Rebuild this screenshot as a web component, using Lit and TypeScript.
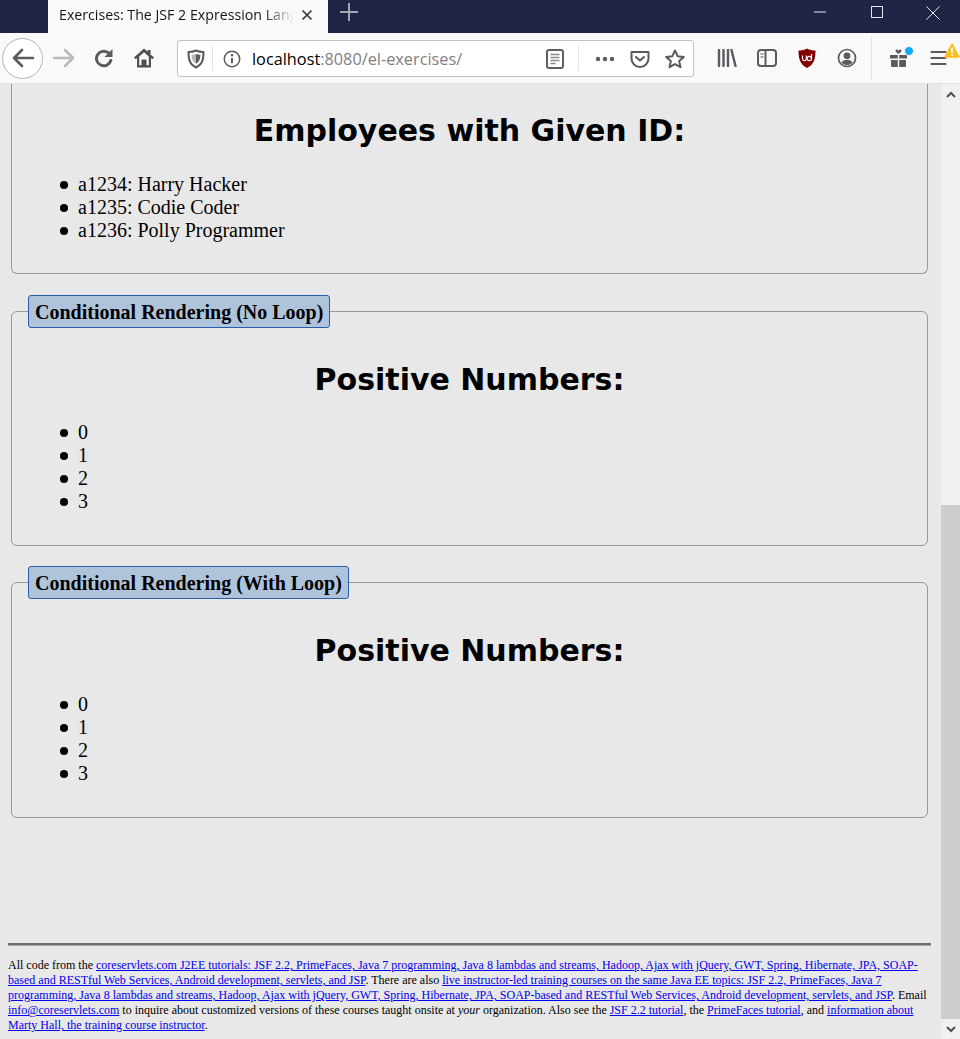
import { LitElement, css, html, svg } from "lit";
import { customElement } from "lit/decorators.js";

const ico = (w: number, h: number, body: unknown) =>
  html`<svg width=${w} height=${h} viewBox="0 0 ${w} ${h}" fill="none">${body}</svg>`;

const icons = {
  back: ico(24, 24, svg`<path d="M3 12h19M11 4l-8 8 8 8" stroke="#5b5b5e" stroke-width="2.600" stroke-linecap="round" stroke-linejoin="round"/>`),
  forward: ico(24, 24, svg`<path d="M2 12h19M13 4l8 8-8 8" stroke="#b9b9bb" stroke-width="2.600" stroke-linecap="round" stroke-linejoin="round"/>`),
  reload: ico(20, 20, svg`<path d="M16.800 12.500A7.300 7.300 0 1 1 14 4.500L16.500 7" stroke="#5b5b5e" stroke-width="3" stroke-linecap="round"/><path d="M18.500 1v8h-8z" fill="#5b5b5e"/>`),
  home: ico(22, 22, svg`<path d="M11 1.500 1 10.500l1.600 1.800 1.400-1.200V20.500h14V11.100l1.400 1.200 1.600-1.800L17.500 7.400V3h-3v1.700z" fill="#505053"/><path d="M11 5.200 6.200 9.500v8.800h2.300v-4.800a1 1 0 0 1 1-1h3a1 1 0 0 1 1 1v4.800h2.300V9.500z" fill="#f9f9fa"/><path d="M9.800 14.500h2.400v4.500H9.800z" fill="#505053"/>`),
  shield: ico(18, 20, svg`<path d="M9 1.500c2 1 5 1.500 7.500 1.500 0 7.500-1 12.500-7.500 15.500C2.500 15.500 1.500 10.500 1.500 3 4 3 7 2.500 9 1.500z" stroke="#5b5b5e" stroke-width="2" stroke-linejoin="round"/><path d="M9 5c1.200.5 3 .8 4.400.8 0 4.200-1 7-4.400 9z" fill="#5b5b5e"/><path d="M9 5c-1.200.5-3 .8-4.400.8 0 4.200 1 7 4.400 9z" fill="#b5b5b8"/>`),
  info: ico(18, 18, svg`<circle cx="9" cy="9" r="7.700" stroke="#5b5b5e" stroke-width="1.500"/><path d="M9 8v5.200" stroke="#5b5b5e" stroke-width="1.900"/><circle cx="9" cy="5.200" r="1.200" fill="#5b5b5e"/>`),
  reader: ico(18, 20, svg`<rect x="1" y="1" width="16" height="18" rx="2" stroke="#5f5f62" stroke-width="2"/><path d="M4.500 5.500h9M4.500 8.500h9M4.500 11.500h9M4.500 14.500h5" stroke="#8a8a8d" stroke-width="1.600"/>`),
  dots: ico(20, 6, svg`<circle cx="3" cy="3" r="2.200" fill="#5b5b5e"/><circle cx="10" cy="3" r="2.200" fill="#5b5b5e"/><circle cx="17" cy="3" r="2.200" fill="#5b5b5e"/>`),
  pocket: ico(20, 18, svg`<path d="M1.500 2h17v6.500a8.500 8.500 0 0 1-17 0z" stroke="#5b5b5e" stroke-width="2" stroke-linejoin="round"/><path d="M6 7l4 3.500L14 7" stroke="#5b5b5e" stroke-width="2" stroke-linecap="round" stroke-linejoin="round"/>`),
  star: ico(20, 20, svg`<path d="M10 1.500l2.600 5.700 6.200.7-4.600 4.200 1.300 6.100L10 15.100l-5.500 3.100 1.300-6.100L1.200 7.900l6.200-.7z" stroke="#5b5b5e" stroke-width="2" stroke-linejoin="round"/>`),
  library: ico(20, 18, svg`<path d="M2 1v16M6.500 1v16M11 1v16M14.500 1l4 16" stroke="#5b5b5e" stroke-width="2.400" stroke-linecap="round"/>`),
  sidebar: ico(20, 18, svg`<rect x="1" y="1" width="18" height="16" rx="3" stroke="#5b5b5e" stroke-width="2"/><path d="M8.500 1v16" stroke="#5b5b5e" stroke-width="2"/><path d="M3.500 5h3M3.500 8h3" stroke="#8a8a8d" stroke-width="1.500"/>`),
  ublock: ico(18, 20, svg`<path d="M9 0.500c2.500 1.500 5.500 2 8.500 2 0 8-1.500 14-8.500 17.500C2 16.500.5 10.500.5 2.500c3 0 6-.5 8.500-2z" fill="#800000"/><path d="M4.500 7.500v3.200a1.900 1.900 0 0 0 3.800 0V7.500" stroke="#fff" stroke-width="1.200"/><circle cx="11.300" cy="10.500" r="2.200" stroke="#fff" stroke-width="1.200"/><path d="M13.500 6v4.500" stroke="#fff" stroke-width="1.200"/>`),
  account: ico(20, 20, svg`<circle cx="10" cy="10" r="8.500" stroke="#5b5b5e" stroke-width="1.700"/><circle cx="10" cy="7.800" r="3.400" fill="#5b5b5e"/><path d="M4.500 14.500c1-2 3-2.500 5.500-2.500s4.500.5 5.500 2.500C14 16.500 12 17 10 17s-4-.5-5.500-2.500z" fill="#5b5b5e"/>`),
  gift: ico(20, 20, svg`<path d="M1 7h7.800v3.500H1zM10.200 7H18v3.500h-7.800zM2 12h6.800v7H3a1 1 0 0 1-1-1zM10.200 12H17v6a1 1 0 0 1-1 1h-5.800z" fill="#5b5b5e"/><path d="M9.500 6C8 4.800 6 3.800 6.500 2.300 7 1 9 1.500 9.500 2.600 10 1.500 12 1 12.500 2.300 13 3.800 11 4.800 9.500 6z" fill="#5b5b5e"/>`),
  menu: ico(18, 16, svg`<path d="M1.500 2h14M1.500 8h14M1.500 14h14" stroke="#5b5b5e" stroke-width="2.200" stroke-linecap="round"/>`),
  warn: ico(16, 15, svg`<path d="M8 1 15 14H1z" fill="#ffbf1f" stroke="#ffbf1f" stroke-width="1.500" stroke-linejoin="round"/><path d="M8 4.500v5.200" stroke="#fff" stroke-width="1.800"/><circle cx="8" cy="12" r="1.100" fill="#fff"/>`),
  tabClose: ico(12, 12, svg`<path d="M1.500 1.500l9 9M10.500 1.500l-9 9" stroke="#38383d" stroke-width="1.700"/>`),
  plus: ico(18, 18, svg`<path d="M9 0v18M0 9h18" stroke="#a5a6b4" stroke-width="2"/>`),
  min: ico(12, 2, svg`<path d="M0 1h12" stroke="#e6e6ea" stroke-width="1"/>`),
  max: ico(12, 12, svg`<rect x=".5" y=".5" width="11" height="11" stroke="#e6e6ea"/>`),
  close: ico(14, 14, svg`<path d="M.5.500l13 13M13.500.500l-13 13" stroke="#e6e6ea" stroke-width="1"/>`),
  up: ico(10, 7, svg`<path d="M1 6l4-4 4 4" stroke="#505050" stroke-width="2"/>`),
  down: ico(10, 7, svg`<path d="M1 1l4 4 4-4" stroke="#505050" stroke-width="2"/>`),
};

const numbers = ["0", "1", "2", "3"];

@customElement("app-root")
export class AppRoot extends LitElement {
  static styles = css`
    :host {
      display: flex;
      flex-direction: column;
      width: 960px;
      height: 1039px;
      overflow: hidden;
      background: #e8e8e8;
      font-family: "Liberation Serif", serif;
      color: #000;
    }

    .tabbar {
      display: flex;
      align-items: stretch;
      height: 33px;
      flex: none;
      padding-left: 48px;
      background: #1f2344;
    }
    .tab {
      display: flex;
      align-items: center;
      width: 280px;
      box-sizing: border-box;
      padding: 0 14px 4px 11px;
      background: #f9f9fa;
      font: 14.200px "Open Sans", sans-serif;
      color: #15141a;
    }
    .tab-title {
      width: 235px;
      white-space: nowrap;
      overflow: hidden;
      -webkit-mask-image: linear-gradient(to right, #000 205px, transparent 235px);
      mask-image: linear-gradient(to right, #000 205px, transparent 235px);
    }
    .tab svg {
      margin-left: 7px;
    }
    .plus {
      display: flex;
      margin: 3px 0 0 12px;
    }
    .win {
      display: flex;
      align-items: flex-start;
      margin-left: auto;
      padding: 6px 20px 0 0;
      gap: 43px;
    }
    .win svg {
      display: block;
    }
    .win .m {
      margin: 5px 2px 0 0;
    }

    .toolbar {
      display: flex;
      align-items: center;
      height: 51px;
      flex: none;
      box-sizing: border-box;
      background: #f9f9fa;
      border-bottom: 1px solid #e1e1e2;
    }
    .backbtn {
      display: flex;
      align-items: center;
      justify-content: center;
      width: 41px;
      height: 41px;
      box-sizing: border-box;
      margin: 0 1px 0 2px;
      background: #fff;
      border: 1px solid #b4b4b6;
      border-radius: 50%;
    }
    .btn {
      display: flex;
      align-items: center;
      justify-content: center;
      width: 40px;
      height: 40px;
      flex: none;
    }
    .urlbar {
      display: flex;
      align-items: center;
      width: 517px;
      height: 37px;
      box-sizing: border-box;
      margin: 1px 13px 0 13px;
      background: #fff;
      border: 1px solid #c2c2c4;
      border-radius: 3px;
      font: 16.300px "Open Sans", sans-serif;
      color: #808083;
    }
    .urlbar .shield {
      display: flex;
      margin-left: 9px;
    }
    .sep {
      width: 1px;
      height: 25px;
      background: #e3e3e5;
      flex: none;
    }
    .urlbar .sep.a {
      margin: 0 10px 0 7px;
    }
    .urlbar .info {
      display: flex;
    }
    .urlbar .url {
      margin-left: 11px;
      white-space: nowrap;
      width: 294px;
    }
    .url b {
      font-weight: 400;
      color: #000;
    }
    .urlbar .reader {
      display: flex;
    }
    .urlbar .sep.b {
      margin: 0 16px 0 14px;
    }
    .urlbar .dots {
      display: flex;
    }
    .urlbar .pocket {
      display: flex;
      margin-left: 15px;
    }
    .urlbar .star {
      display: flex;
      margin-left: 15px;
    }
    .tools {
      display: flex;
      align-items: center;
      height: 100%;
    }
    .tools .btn {
      position: relative;
    }
    .tools .sep {
      height: 43px;
      margin: 0 7px 0 4px;
    }
    .badge {
      position: absolute;
      top: 8px;
      right: 5px;
      width: 8px;
      height: 8px;
      background: #12a8f5;
      border-radius: 50%;
      border: 1px solid #f9f9fa;
    }
    .warn {
      position: absolute;
      top: 5px;
      right: -1px;
      display: flex;
    }

    .main {
      display: flex;
      flex: 1;
      min-height: 0;
    }
    .page {
      flex: 1;
      min-width: 0;
      box-sizing: border-box;
      display: flex;
      flex-direction: column;
      padding: 0 10px 0 8px;
      background: #e8e8e8;
    }
    .scrollbar {
      display: flex;
      flex-direction: column;
      align-items: center;
      justify-content: space-between;
      width: 19px;
      flex: none;
      background: #f0f0f0;
    }
    .scrollbar .arrow {
      display: flex;
      align-items: center;
      height: 20px;
    }
    .scrollbar .spacer {
      height: 401px;
      flex: none;
    }
    .scrollbar .thumb {
      width: 100%;
      flex: 1;
      background: #cdcdcd;
    }

    fieldset {
      margin: 0 3px 20px 3px;
      padding: 0 16px 32px 16px;
      border: 1px solid #999;
      border-radius: 6px;
    }
    fieldset.cut {
      border-top: none;
      border-top-left-radius: 0;
      border-top-right-radius: 0;
      padding-bottom: 31px;
      margin-bottom: 21px;
    }
    legend {
      padding: 5px 6px 3px;
      font-size: 20px;
      font-weight: 700;
      line-height: 23px;
      background: #afc4da;
      border: 1px solid #2a5ca8;
      border-radius: 3px;
    }
    h2 {
      margin: 0;
      padding-top: 32px;
      text-align: center;
      font: 700 30px/40px "DejaVu Sans", sans-serif;
    }
    ul {
      margin: 21px 0 0 0;
      padding-left: 32px;
      list-style: none;
      font-size: 20px;
      line-height: 23px;
    }
    .cut ul,
    .loop ul {
      margin-top: 22px;
    }
    li {
      display: flex;
      align-items: center;
      gap: 10px;
    }
    li::before {
      content: "";
      width: 8px;
      height: 8px;
      margin-top: 1px;
      background: #000;
      border-radius: 50%;
    }
    .cut h2 {
      padding-top: 27px;
    }
    hr {
      margin: auto 0 0;
      height: 3px;
      box-sizing: border-box;
      border: none;
      border-top: 2px solid #6e6e6e;
      border-bottom: 1px solid #aaa;
    }
    .foot {
      margin: 12px 0 0;
      font-size: 12px;
      line-height: 15px;
      padding-bottom: 6px;
    }
  `;

  renderList(items: string[]) {
    return html`<ul>${items.map((i) => html`<li>${i}</li>`)}</ul>`;
  }

  render() {
    return html`
      <div class="tabbar">
        <div class="tab">
          <span class="tab-title">Exercises: The JSF 2 Expression Language</span>
          ${icons.tabClose}
        </div>
        <div class="plus">${icons.plus}</div>
        <div class="win">
          <span class="m">${icons.min}</span>
          ${icons.max}
          ${icons.close}
        </div>
      </div>
      <div class="toolbar">
        <div class="backbtn">${icons.back}</div>
        <div class="btn">${icons.forward}</div>
        <div class="btn">${icons.reload}</div>
        <div class="btn">${icons.home}</div>
        <div class="urlbar">
          <span class="shield">${icons.shield}</span>
          <span class="sep a"></span>
          <span class="info">${icons.info}</span>
          <span class="url"><b>localhost</b>:8080/el-exercises/</span>
          <span class="reader">${icons.reader}</span>
          <span class="sep b"></span>
          <span class="dots">${icons.dots}</span>
          <span class="pocket">${icons.pocket}</span>
          <span class="star">${icons.star}</span>
        </div>
        <div class="tools">
          <div class="btn">${icons.library}</div>
          <div class="btn">${icons.sidebar}</div>
          <div class="btn">${icons.ublock}</div>
          <div class="btn">${icons.account}</div>
          <span class="sep"></span>
          <div class="btn">${icons.gift}<span class="badge"></span></div>
          <div class="btn">${icons.menu}<span class="warn">${icons.warn}</span></div>
        </div>
      </div>
      <div class="main">
        <div class="page">
          <fieldset class="cut">
            <h2>Employees with Given ID:</h2>
            ${this.renderList(["a1234: Harry Hacker", "a1235: Codie Coder", "a1236: Polly Programmer"])}
          </fieldset>
          <fieldset>
            <legend>Conditional Rendering (No Loop)</legend>
            <h2>Positive Numbers:</h2>
            ${this.renderList(numbers)}
          </fieldset>
          <fieldset class="loop">
            <legend>Conditional Rendering (With Loop)</legend>
            <h2>Positive Numbers:</h2>
            ${this.renderList(numbers)}
          </fieldset>
          <hr />
          <p class="foot">
            All code from the
            <a href="#">coreservlets.com J2EE tutorials: JSF 2.2, PrimeFaces, Java 7 programming, Java 8 lambdas and streams, Hadoop, Ajax with jQuery, GWT, Spring, Hibernate, JPA, SOAP-based and RESTful Web Services, Android development, servlets, and JSP</a>.
            There are also
            <a href="#">live instructor-led training courses on the same Java EE topics: JSF 2.2, PrimeFaces, Java 7 programming, Java 8 lambdas and streams, Hadoop, Ajax with jQuery, GWT, Spring, Hibernate, JPA, SOAP-based and RESTful Web Services, Android development, servlets, and JSP</a>.
            Email <a href="#">info@coreservlets.com</a> to inquire about customized versions of these courses taught onsite at <i>your</i> organization. Also see the
            <a href="#">JSF 2.2 tutorial</a>, the <a href="#">PrimeFaces tutorial</a>, and
            <a href="#">information about Marty Hall, the training course instructor</a>.
          </p>
        </div>
        <div class="scrollbar">
          <span class="arrow">${icons.up}</span>
          <span class="spacer"></span>
          <span class="thumb"></span>
          <span class="arrow">${icons.down}</span>
        </div>
      </div>
    `;
  }
}
